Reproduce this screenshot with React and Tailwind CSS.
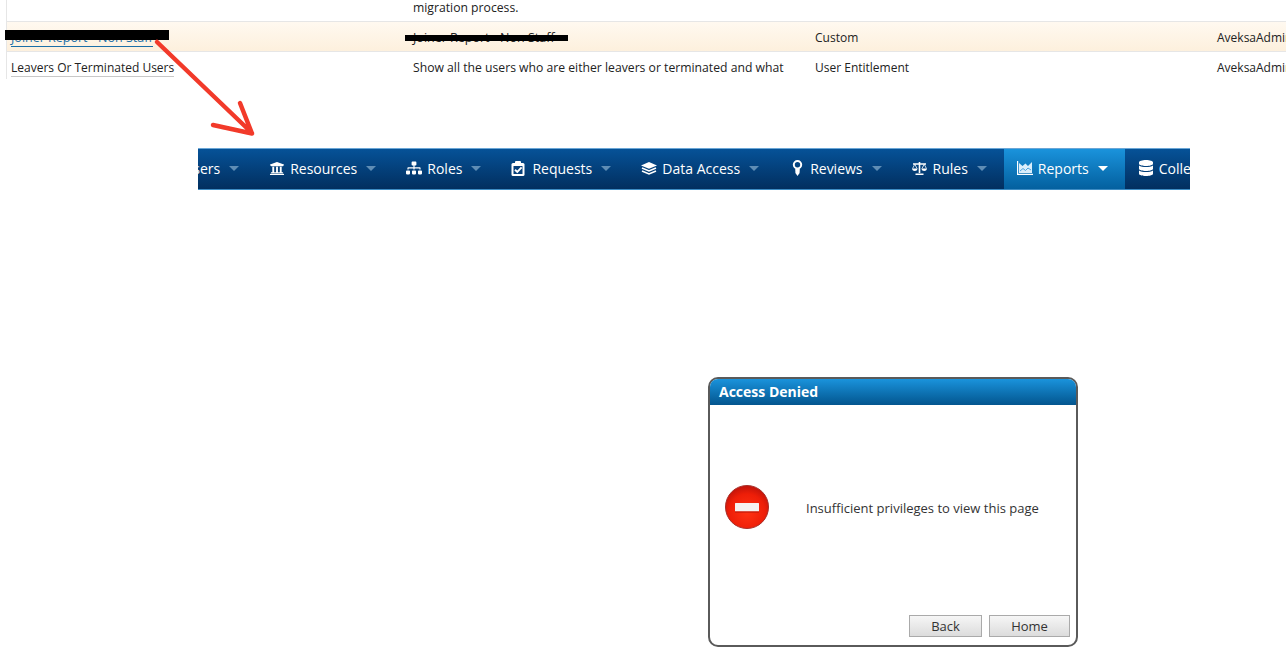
import React from 'react';
import { FaUsers, FaUniversity, FaSitemap, FaDatabase } from 'react-icons/fa';

function RequestsIcon() {
  return (
    <svg width="14" height="15" viewBox="0 0 14 15" className="shrink-0 mr-[7px]">
      <rect x="0.5" y="2" width="13" height="13" rx="1.5" fill="#fff" />
      <rect x="4" y="0" width="6" height="4" rx="1" fill="#fff" />
      <rect x="2.5" y="5" width="9" height="8" fill="#06407c" />
      <path d="M4 8.8L6.3 11L10.6 6.4" fill="none" stroke="#fff" strokeWidth="1.9" />
    </svg>
  );
}

function LayersIcon() {
  return (
    <svg width="16" height="13" viewBox="0 0 16 13" className="shrink-0 mr-[5px]">
      <path d="M8 0L16 3.4L8 6.8L0 3.4Z" fill="#fff" />
      <path d="M1 6L8 9L15 6M1 9L8 12L15 9" fill="none" stroke="#fff" strokeWidth="1.6" />
    </svg>
  );
}

function RibbonIcon() {
  return (
    <svg width="11" height="16" viewBox="0 0 11 16" className="shrink-0 ml-[3px] mr-[7px]">
      <circle cx="5.5" cy="4.8" r="3.7" fill="none" stroke="#fff" strokeWidth="2" />
      <path d="M3.2 8.5H7.8L7.6 13L5.5 16L3.4 13Z" fill="#fff" />
    </svg>
  );
}

function ScaleIcon() {
  return (
    <svg width="15" height="13" viewBox="0 0 15 13" className="shrink-0 mr-[6px]">
      <path d="M1 2H14M7.5 0V11M3.5 12.2H11.5" fill="none" stroke="#fff" strokeWidth="1.6" />
      <path d="M0 6.5H5.6C5.4 8.2 4.2 9 2.8 9C1.4 9 .2 8.2 0 6.5ZM9.4 6.5H15C14.8 8.2 13.6 9 12.2 9C10.8 9 9.6 8.2 9.4 6.5Z" fill="#fff" />
      <path d="M.6 6.5L2.8 2.2L5 6.5M10 6.5L12.2 2.2L14.4 6.5" fill="none" stroke="#fff" strokeWidth=".8" />
    </svg>
  );
}

function AreaIcon() {
  return (
    <svg width="16" height="14" viewBox="0 0 16 14" className="shrink-0 mr-[5px]">
      <path d="M.6 0V13.4H16" fill="none" stroke="#fff" strokeWidth="1.2" />
      <path d="M2 12V2L5.5 5L8.5 2.5L11 5L15 1V12Z" fill="#d9eefb" />
      <path d="M3 10L6 7.5L8.5 9.5L11 7L14 9" fill="none" stroke="#4ba3de" strokeWidth="1" />
    </svg>
  );
}

const navItems = [
  { label: 'Users', icon: <FaUsers className="shrink-0 text-white w-[16px] h-[14px] mr-[5px]" />, first: true },
  { label: 'Resources', icon: <FaUniversity className="shrink-0 text-white w-[16px] h-[15px] mr-[5px]" /> },
  { label: 'Roles', icon: <FaSitemap className="shrink-0 text-white w-[16px] h-[14px] mr-[5px]" /> },
  { label: 'Requests', icon: <RequestsIcon /> },
  { label: 'Data Access', icon: <LayersIcon /> },
  { label: 'Reviews', icon: <RibbonIcon /> },
  { label: 'Rules', icon: <ScaleIcon /> },
  { label: 'Reports', icon: <AreaIcon />, active: true },
  { label: 'Collections', icon: <FaDatabase className="shrink-0 text-white w-[16px] h-[16px] mr-[5px]" /> },
];

function TableRow({ name, description, type, owner, highlight, link, className }) {
  return (
    <div className={`grid grid-cols-[402px_402px_402px_1fr] pl-[4px] text-[12px] text-[#222] ${highlight ? 'bg-gradient-to-b from-[#fff9f0] to-[#fdf0dd] border-y border-[#e6e6e6]' : ''} ${className || ''}`}>
      <span className="whitespace-nowrap">
        {name && <a className={`border-b ${link ? 'text-[12.5px] text-[#1b6fa8] border-[#1b6fa8]' : 'border-[#c8c8c8]'}`}>{name}</a>}
      </span>
      <span className={`whitespace-nowrap ${link ? 'text-[12.5px]' : 'text-[12.2px]'}`}>{description}</span>
      <span className="whitespace-nowrap">{type}</span>
      <span className="whitespace-nowrap">{owner}</span>
    </div>
  );
}

function NavItem({ item }) {
  return (
    <div className={`flex items-center shrink-0 h-full pl-[13px] pr-[17px] pb-[2px] ${item.first ? 'ml-[-49px]' : ''} ${item.active ? 'bg-gradient-to-b from-[#1a93dc] to-[#04609f]' : ''}`}>
      {item.icon}
      <span className="text-[14px] text-white whitespace-nowrap">{item.label}</span>
      <span className={`ml-[9px] w-0 h-0 border-x-[5px] border-x-transparent border-t-[5px] ${item.active ? 'border-t-white' : 'border-t-[#5f8db5]'}`} />
    </div>
  );
}

function StopIcon() {
  return (
    <svg width="46" height="46" viewBox="0 0 46 46" className="shrink-0 mb-[5px]">
      <defs>
        <radialGradient id="stopFill" cx="50%" cy="62%" r="60%">
          <stop offset="0%" stopColor="#ff3312" />
          <stop offset="70%" stopColor="#ee1e08" />
          <stop offset="100%" stopColor="#c4140a" />
        </radialGradient>
      </defs>
      <circle cx="23" cy="23" r="21.5" fill="url(#stopFill)" stroke="#a8302a" strokeWidth="1" />
      <rect x="11" y="19" width="24" height="8.5" rx="0.5" fill="#f6f2f0" />
      <rect x="11" y="27.5" width="24" height="1" fill="#b51408" />
    </svg>
  );
}

export default function App() {
  return (
    <div className="relative w-[1286px] h-[662px] overflow-hidden bg-white font-['Open_Sans',sans-serif]">
      {/* table left over from the first capture */}
      <div className="ml-[6px] border-l border-[#e6e6e6] h-[79px] overflow-hidden">
        <TableRow description="migration process." className="h-[21px] leading-[15px]" />
        <TableRow
          name="Joiner Report - Non Staff"
          description="Joiner Report - Non Staff"
          type="Custom"
          owner="AveksaAdmin"
          highlight
          link
          className="h-[31px] items-center pt-[3px]"
        />
        <TableRow
          name="Leavers Or Terminated Users"
          description="Show all the users who are either leavers or terminated and what"
          type="User Entitlement"
          owner="AveksaAdmin"
          className="h-[30px] items-center pt-[2px]"
        />
      </div>

      {/* nav bar */}
      <div className="ml-[198px] mt-[69px] w-[992px] h-[42px] flex overflow-hidden border-y border-t-[#6aa6d6] border-b-[#3d8cc4] bg-gradient-to-b from-[#065298] to-[#022f5f]">
        {navItems.map((item) => <NavItem key={item.label} item={item} />)}
      </div>

      {/* access denied dialog */}
      <div className="ml-[708px] mt-[187px] w-[370px] h-[270px] flex flex-col border-2 border-[#5a5a5a] rounded-[10px] overflow-hidden bg-white">
        <div className="h-[26px] shrink-0 flex items-center pl-[9px] pb-[2px] bg-gradient-to-b from-[#1a93dc] to-[#04568f] text-white text-[14px] font-bold">
          Access Denied
        </div>
        <div className="flex-1 flex items-center pl-[14px] pb-[2px]">
          <StopIcon />
          <span className="ml-[36px] text-[13px] text-[#333] whitespace-nowrap">Insufficient privileges to view this page</span>
        </div>
        <div className="flex justify-end gap-[7px] pr-[6px] pb-[8px]">
          <button className="w-[73px] h-[22px] pt-[1px] border border-[#aaa] bg-gradient-to-b from-[#f6f6f6] to-[#dcdcdc] text-[13px] text-[#333]">Back</button>
          <button className="w-[81px] h-[22px] pt-[1px] border border-[#aaa] bg-gradient-to-b from-[#f6f6f6] to-[#dcdcdc] text-[13px] text-[#333]">Home</button>
        </div>
      </div>

      {/* annotations drawn on top of the screenshot */}
      <div className="absolute left-[5px] top-[30px] w-[164px] h-[10px] bg-black" />
      <div className="absolute left-[405px] top-[35px] w-[163px] h-[6px] bg-black" />
      <svg className="absolute left-0 top-0 pointer-events-none" width="300" height="150">
        <path d="M157 42L252 133M213 125L252 133.5M240 103L252 133.5" fill="none" stroke="#f23a2a" strokeWidth="4.5" strokeLinecap="round" />
      </svg>
    </div>
  );
}
